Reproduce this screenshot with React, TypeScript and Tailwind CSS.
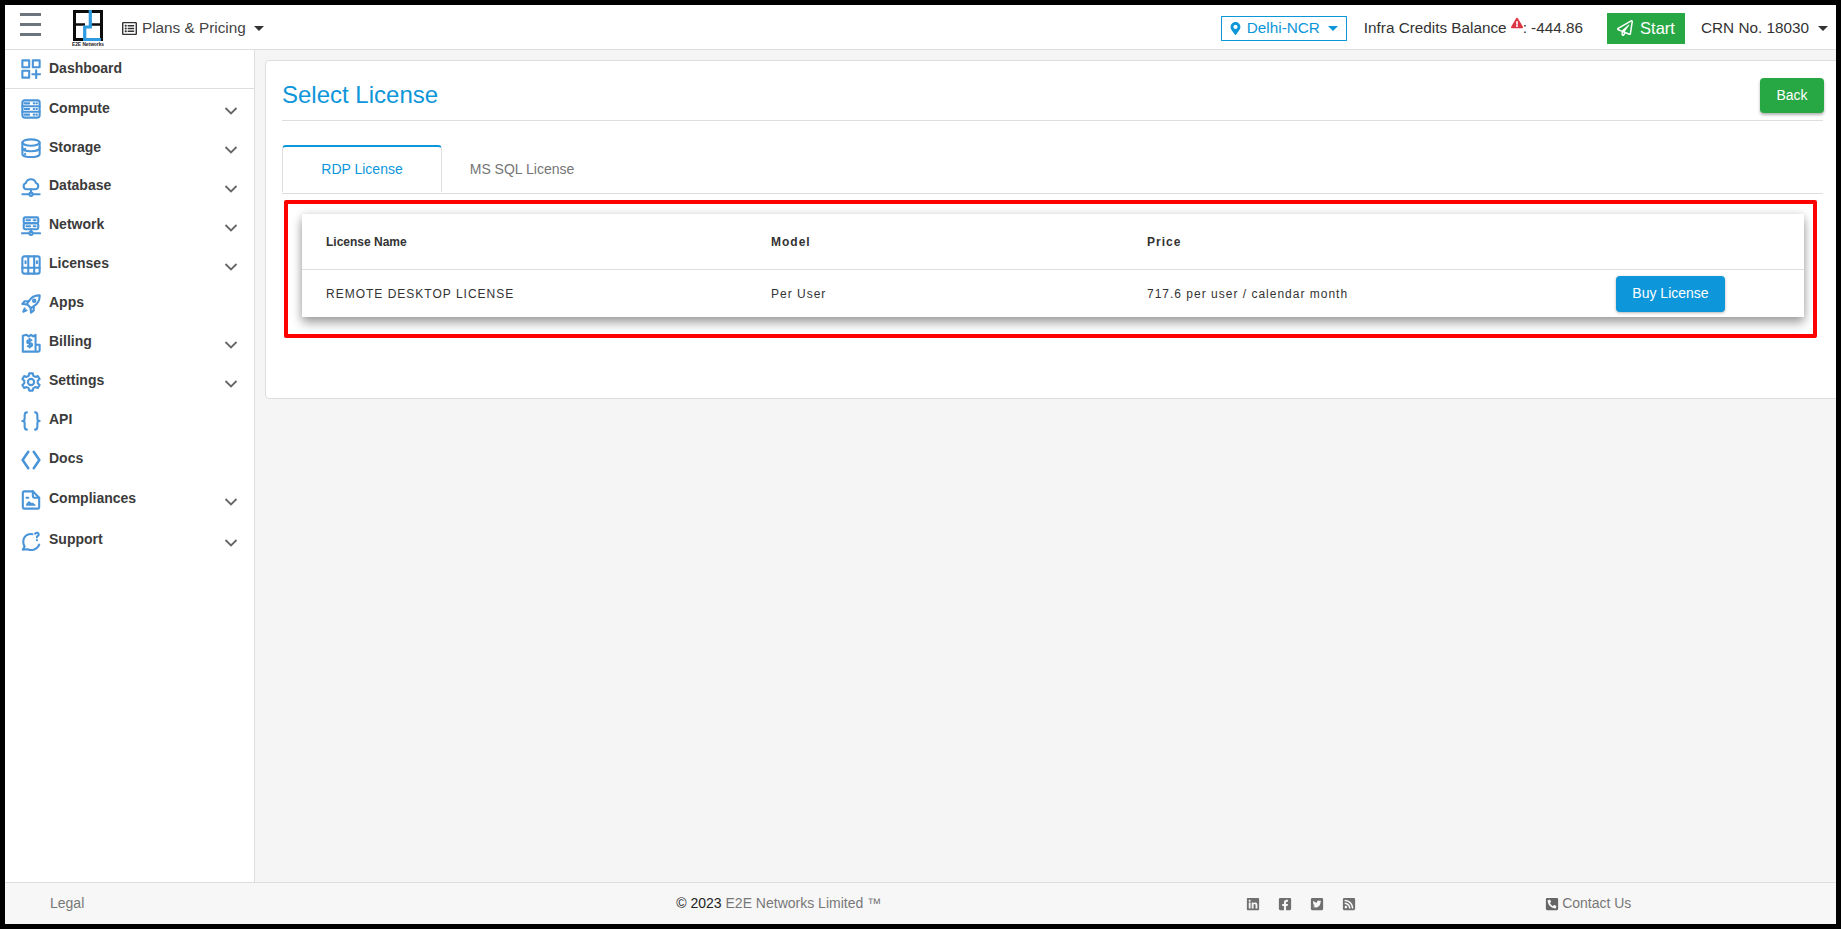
import React from "react";
import { FaRegPaperPlane, FaMapMarkerAlt, FaExclamationTriangle, FaRegListAlt, FaLinkedin, FaFacebookSquare, FaTwitterSquare, FaRssSquare, FaPhoneSquareAlt } from "react-icons/fa";

const S = (p: { children: React.ReactNode }) => (
  <svg width="20" height="20" viewBox="0 0 22 22" fill="none" stroke="#4a94d8" strokeWidth="2.300" strokeLinecap="round" strokeLinejoin="round" className="shrink-0">
    {p.children}
  </svg>
);

const icons: Record<string, React.ReactNode> = {
  Dashboard: (<S><rect x="1.500" y="1.500" width="7.500" height="7.500" /><rect x="13" y="1.500" width="7.500" height="7.500" /><rect x="1.500" y="13" width="7.500" height="7.500" /><path d="M16.700 12.500v8.500M12.500 16.700h8.500" /></S>),
  Compute: (<S><rect x="1.500" y="1.500" width="19" height="19" rx="2.500" /><path d="M1.500 8h19M1.500 14h19" /><path d="M4 4.800h5M14 4.800h.5M17 4.800h.5M4 11h5M14 11h.5M17 11h.5M4 17.200h5M14 17.200h.5M17 17.200h.5" /></S>),
  Storage: (<S><ellipse cx="11" cy="5" rx="9.500" ry="3.500" /><path d="M1.500 5v12.500c0 2 4.200 3.500 9.500 3.500s9.500-1.500 9.500-3.500V5" /><path d="M1.500 11c0 2 4.200 3.500 9.500 3.500s9.500-1.500 9.500-3.500" /><path d="M4.500 11.800v.4M4.500 17.300v.4" /></S>),
  Database: (<S><path d="M6 13.500a3.600 3.600 0 0 1-.6-7A5.800 5.800 0 0 1 16.400 6.500a3.600 3.600 0 0 1-.4 7Z" /><path d="M11 13.500v4M1.500 19h6.500M14 19h6.500" /><circle cx="11" cy="19" r="1.800" /></S>),
  Network: (<S><rect x="3" y="1.500" width="16" height="6.500" rx="1.500" /><rect x="3" y="8" width="16" height="6.500" rx="1.500" /><path d="M6 4.700h4M14 4.700h2M6 11.200h4M14 11.200h2M11 14.500v3M1 19h7M14 19h7" /><circle cx="11" cy="19" r="1.800" /></S>),
  Licenses: (<S><rect x="1.500" y="1.500" width="19" height="19" rx="2" /><path d="M1.500 14h19M8 1.500v19M14.500 1.500v19" /><path d="M5 7v2M17.500 7v2" /></S>),
  Apps: (<S><path d="M20.500 1.500c-5-.3-9 1.700-11.500 6L6.500 11l4.500 4.500 3.500-2.500c4.300-2.500 6.300-6.500 6-11.500Z" /><path d="M8 8H4L1.500 11l5 .5M14 14v4l-3 2.500-.5-5" /><circle cx="14.500" cy="7.500" r="1.300" /><path d="M4 16l-1.500 3.500L6 18" /></S>),
  Billing: (<S><path d="M16 18.500V2l-2.500 1.800L11 2 8.500 3.800 6 2 2 3v17.500h17a1.500 1.500 0 0 0 1.500-1.500v-6H16" /><path d="M11.500 8H8.500a1.300 1.300 0 0 0 0 3.200h2a1.300 1.300 0 0 1 0 3.300H7.500M9.500 6.500v9.500" /></S>),
  Settings: (<S><circle cx="11" cy="11" r="3.400" /><path d="M9 1.500h4l.6 2.800 2.200 1.100 2.700-1 2 3.400-2.100 1.900v2.600l2.100 1.900-2 3.400-2.700-1-2.200 1.100-.6 2.800H9l-.6-2.800-2.200-1.100-2.700 1-2-3.400 2.100-1.900V9.700L1.500 7.800l2-3.400 2.700 1 2.200-1.100Z" /></S>),
  API: (<S><path d="M6.500 1.500C4 1.500 4 3 4 5v3.500c0 1.500-.7 2.500-2.500 2.500C3.300 11 4 12 4 13.500V17c0 2 0 3.500 2.500 3.500M15.500 1.500C18 1.500 18 3 18 5v3.500c0 1.500.7 2.500 2.500 2.500-1.800 0-2.500 1-2.500 2.500V17c0 2 0 3.500-2.500 3.500" /></S>),
  Docs: (<svg width="20" height="20" viewBox="0 0 22 22" fill="none" stroke="#4a94d8" strokeWidth="2.800" strokeLinecap="round" strokeLinejoin="round" className="shrink-0"><path d="M8 2 1.800 11 8 20M14 2l6.200 9L14 20" /></svg>),
  Compliances: (<S><path d="M13 1.500H3.500a1.500 1.500 0 0 0-1.500 1.500v16a1.500 1.500 0 0 0 1.500 1.500h15a1.500 1.500 0 0 0 1.500-1.500V8.500Z" /><path d="M13 1.500v5.500a1.500 1.500 0 0 0 1.500 1.500H20" /><path d="M6 8.500h2" /><path d="M6 16.500c.7-2.500 2-3.500 3-3.500s1.200 1.500 2.500 1.500 2-.5 4 2Z" fill="#4a94d8" strokeWidth="1" /></S>),
  Support: (<S><path d="M12.500 3.500C6.500 2.500 2.500 6.500 2.500 12c0 2 .5 3.500 1.500 5L2 20.500l5-.4c5 2 11 .2 13-5.100" /><path d="M15.500 3c.7-1.500 4-1.500 4 .8 0 1.700-2 1.500-2 3.200M17.500 10v.2" /></S>),
};

const rows: [string, boolean][] = [
  ["Compute", true],
  ["Storage", true],
  ["Database", true],
  ["Network", true],
  ["Licenses", true],
  ["Apps", false],
  ["Billing", true],
  ["Settings", true],
  ["API", false],
  ["Docs", false],
  ["Compliances", true],
  ["Support", true],
];

const tops: Record<string, string> = {
  Compliances: "mt-[1px]",
  Support: "mt-[2px]",
};

const Chevron = () => (
  <svg width="14" height="8" viewBox="0 0 14 8" fill="none" stroke="#666" strokeWidth="1.800" className="ml-auto mr-[16px] mt-[5px] shrink-0">
    <path d="M1.500 1 7 6.500 12.500 1" />
  </svg>
);

const Caret = ({ c }: { c: string }) => (
  <svg width="10" height="5" viewBox="0 0 10 5" className="shrink-0"><path d="M0 0h10L5 5Z" fill={c} /></svg>
);

const Item = ({ name, chev }: { name: string; chev: boolean }) => (
  <div className={`h-[39px] flex items-center pl-[16px] ${tops[name] ?? ""}`}>
    {icons[name]}
    <span className={`ml-[8px] text-[14px] font-bold text-[#3b3b3b] ${name === "Compute" || name === "Storage" ? "-mt-[1px]" : "-mt-[3px]"}`}>{name}</span>
    {chev && <Chevron />}
  </div>
);

const Logo = () => (
  <div className="w-[32px] flex flex-col items-center">
    <svg width="30" height="31" viewBox="0 0 30 31" className="block">
      <rect x="1.500" y="1.500" width="27" height="28" fill="none" stroke="#0c0c0c" strokeWidth="3" />
      <path d="M1 14.500h11M18 14.500h11" stroke="#0c0c0c" strokeWidth="2.500" fill="none" />
      <path d="M17.300 0v17H11.700v14M10 29.500h18" stroke="#2e9be0" strokeWidth="3.200" fill="none" />
    </svg>
    <span className="text-[4.800px] leading-[5px] font-bold text-[#222] whitespace-nowrap mt-[1px]">E2E Networks</span>
  </div>
);

export default function App() {
  return (
    <div className="h-[929px] w-[1841px] border-[5px] border-black flex flex-col overflow-hidden bg-[#f5f5f5] font-['Liberation_Sans',sans-serif] text-[#333]">
      <header className="h-[45px] shrink-0 bg-white border-b border-[#dedede] flex items-center">
        <div className="ml-[15px] w-[21px] flex flex-col gap-[7.500px] -mt-[5px]">
          <div className="h-[2.500px] bg-[#6c757d]" />
          <div className="h-[2.500px] bg-[#6c757d]" />
          <div className="h-[2.500px] bg-[#6c757d]" />
        </div>
        <div className="ml-[31px] mt-[2px]"><Logo /></div>
        <div className="ml-[18px] mt-[2px] flex items-center text-[15.300px] text-[#444]">
          <FaRegListAlt className="text-[15px] text-[#333] mr-[5px]" />
          <span>Plans &amp; Pricing</span>
          <span className="ml-[8px]"><Caret c="#333" /></span>
        </div>
        <div className="ml-auto mt-[2px] flex items-center">
          <div className="h-[25px] w-[126px] border border-[#0d96d9] flex items-center text-[#0d96d9] text-[15.300px] pl-[7px]">
            <FaMapMarkerAlt className="text-[13px] mr-[5px]" />
            <span>Delhi-NCR</span>
            <span className="ml-[8px]"><Caret c="#0d96d9" /></span>
          </div>
          <div className="ml-[17px] text-[15.300px] text-[#333] flex items-center whitespace-nowrap">
            <span>Infra Credits Balance</span>
            <FaExclamationTriangle className="text-[12px] text-[#dc3545] ml-[4px] -mt-[10px]" />
            <span>: -444.86</span>
          </div>
          <div className="ml-[24px] h-[31px] w-[78px] bg-[#28a745] text-white flex items-center justify-center text-[16.500px]">
            <FaRegPaperPlane className="text-[16px] mr-[7px]" />
            <span>Start</span>
          </div>
          <div className="ml-[16px] text-[15.300px] text-[#333] flex items-center whitespace-nowrap mr-[8px]">
            <span>CRN No. 18030</span>
            <span className="ml-[9px]"><Caret c="#333" /></span>
          </div>
        </div>
      </header>

      <div className="flex-1 flex min-h-0">
        <aside className="w-[250px] shrink-0 bg-white border-r border-[#dedede]">
          <div className="h-[39px] flex items-center pl-[16px] border-b border-[#dedede]">
            {icons.Dashboard}
            <span className="ml-[8px] text-[14px] font-bold text-[#3b3b3b] -mt-[2px]">Dashboard</span>
          </div>
          {rows.map(([n, c]) => (
            <Item key={n} name={n} chev={c} />
          ))}
        </aside>

        <main className="flex-1 min-w-0 pl-[10px] pt-[10px] overflow-hidden">
          <div className="h-[339px] mr-[-12px] bg-white border border-[#dedede] rounded-[4px] pl-[16px] pr-[12px]">
            <div className="mr-[12px]">
              <div className="h-[60px] border-b border-[#dedede] flex items-start justify-between">
                <h1 className="text-[24px] leading-[28px] text-[#0d96d9] mt-[20px]">Select License</h1>
                <button className="mt-[17px] mr-[-1px] w-[64px] h-[35px] rounded-[4px] bg-[#28a745] text-white text-[14px] shadow-[0_2px_3px_rgba(0,0,0,0.3)]">Back</button>
              </div>
              <div className="mt-[24px] h-[49px] border-b border-[#dedede] flex items-start">
                <div className="w-[160px] h-[47px] border-x border-[#dedede] border-t-2 border-t-[#0d96d9] rounded-t-[4px] flex items-center justify-center text-[14px] text-[#0d96d9]">RDP License</div>
                <div className="w-[160px] h-[47px] pt-[2px] flex items-center justify-center text-[14px] text-[#757575]">MS SQL License</div>
              </div>
              <div className="ml-[2px] mr-[6px] mt-[6px] h-[138px] border-[4px] border-[#ff0000] rounded-[2px] pl-[14px] pr-[9px] pt-[10px]">
                <div className="bg-white h-[103px] shadow-[0_6px_10px_rgba(0,0,0,0.35),0_0_8px_rgba(0,0,0,0.12)]">
                  <div className="h-[56px] border-b border-[#dedede] grid grid-cols-[445px_376px_469px_1fr] items-center pl-[24px] text-[12px] font-bold text-[#333]">
                    <span>License Name</span>
                    <span className="tracking-[1px]">Model</span>
                    <span className="tracking-[1px]">Price</span>
                  </div>
                  <div className="h-[47px] grid grid-cols-[445px_376px_469px_1fr] items-center pl-[24px] text-[12px] text-[#333] tracking-[1px]">
                    <span>REMOTE DESKTOP LICENSE</span>
                    <span>Per User</span>
                    <span>717.6 per user / calendar month</span>
                    <button className="w-[109px] h-[36px] rounded-[4px] bg-[#0d96d9] text-white text-[14px] tracking-normal shadow-[0_1px_3px_rgba(0,0,0,0.3)]">Buy License</button>
                  </div>
                </div>
              </div>
            </div>
          </div>
        </main>
      </div>

      <footer className="h-[42px] shrink-0 bg-[#f7f7f7] border-t border-[#dedede] flex items-center text-[14px] text-[#777] relative">
        <span className="ml-[45px]">Legal</span>
        <span className="ml-[592px]"><span className="text-[#222]">© 2023</span> E2E Networks Limited ™</span>
        <div className="ml-[365px] flex items-center gap-[18px] text-[14px] text-[#6f6f6f]">
          <FaLinkedin />
          <FaFacebookSquare />
          <FaTwitterSquare />
          <FaRssSquare />
        </div>
        <div className="ml-[189px] flex items-center text-[#777]">
          <FaPhoneSquareAlt className="text-[14px] text-[#666] mr-[3px]" />
          <span>Contact Us</span>
        </div>
      </footer>
    </div>
  );
}
